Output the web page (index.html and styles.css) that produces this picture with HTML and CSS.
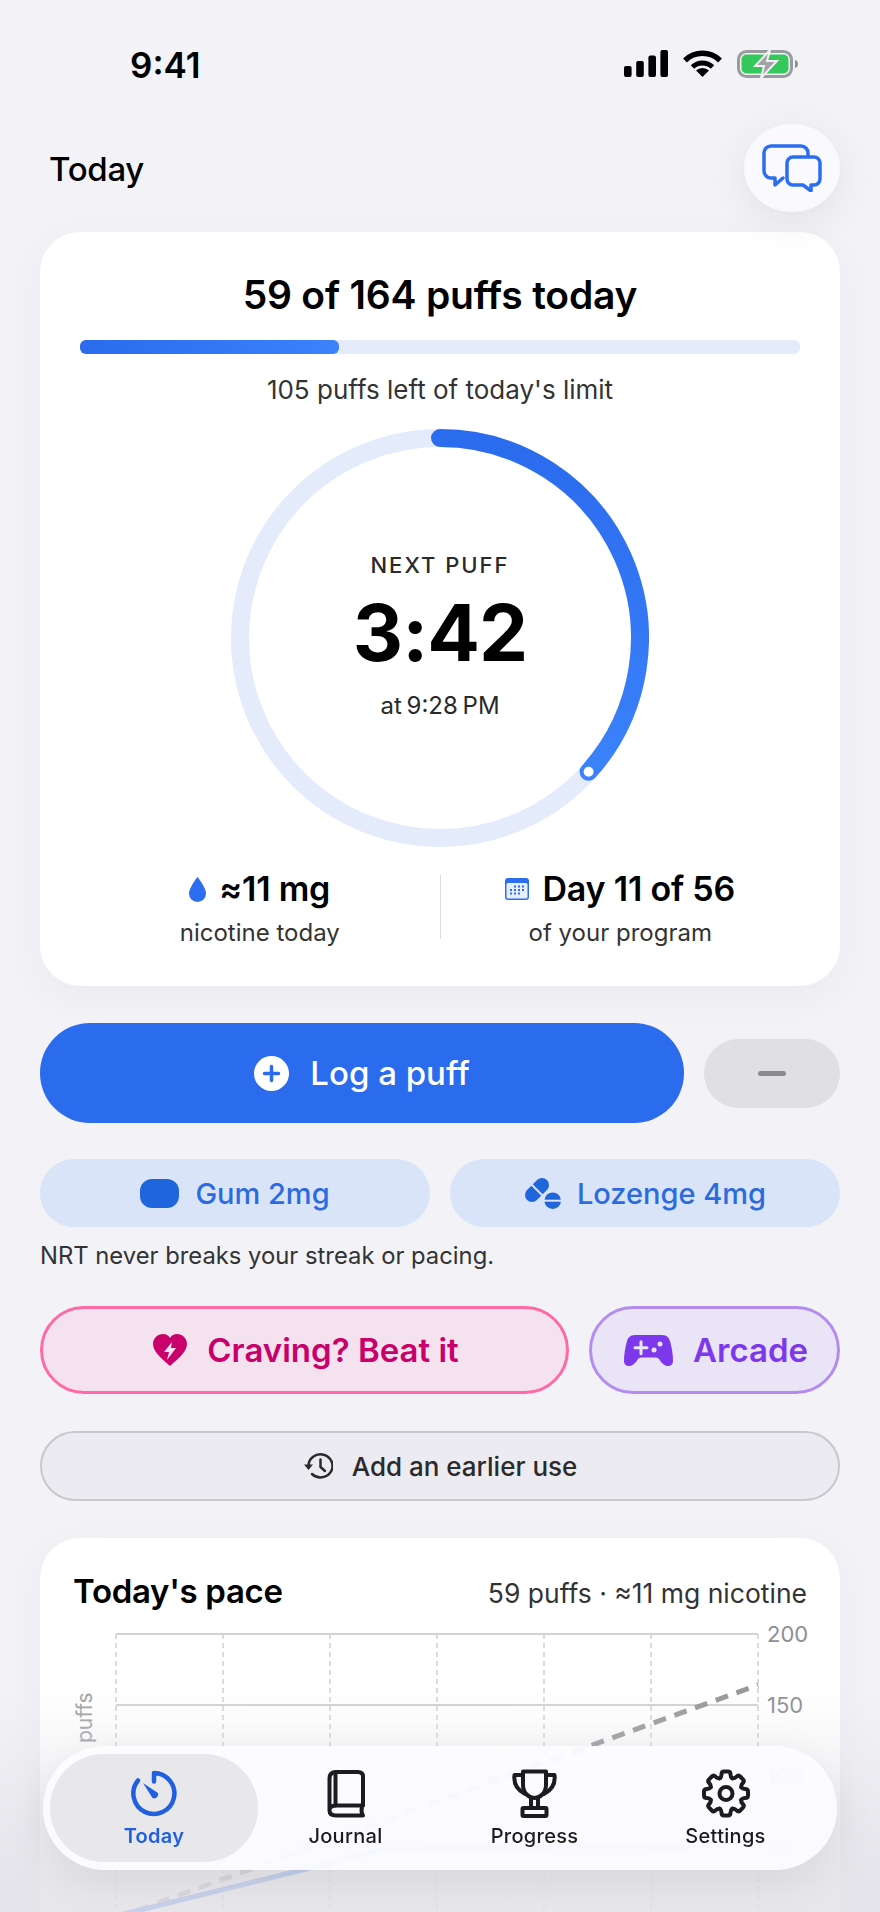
FILE: index.html
```html
<!DOCTYPE html>
<html>
<head>
<meta charset="UTF-8">
<link rel="stylesheet" href="styles.css">
<title>Today</title>
</head>
<body>
<div class="screen">

<div class="status">
  <div class="time">9:41</div>
  <div class="status-icons">
    <svg width="44" height="27" viewBox="0 0 44 27"><rect x="0" y="16" width="7.6" height="11" rx="2"/><rect x="12.2" y="11" width="7.6" height="16" rx="2"/><rect x="24.4" y="5.500" width="7.600" height="21.500" rx="2"/><rect x="36.400" y="0" width="7.600" height="27" rx="2"/></svg>
    <svg width="39" height="27" viewBox="0 0 39 27"><path d="M2 10.500A25 25 0 0 1 37 10.500" fill="none" stroke="#000" stroke-width="5.500"/><path d="M9.500 17A14.500 14.500 0 0 1 29.500 17" fill="none" stroke="#000" stroke-width="5"/><path d="M19.500 27L13 20.500A9.500 9.500 0 0 1 26 20.500Z"/></svg>
    <svg width="62" height="28" viewBox="0 0 62 28"><rect x="1.500" y="1.500" width="53" height="25" rx="8" fill="none" stroke="#9b9b9f" stroke-width="3"/><rect x="4.500" y="4.500" width="47" height="19" rx="5" fill="#34c759"/><path d="M58 10c2 .5 3 2 3 4s-1 3.500-3 4z" fill="#8e8e92"/><path d="M33 0L18 16H27L24 28L40 11H30Z" fill="#a3a3a7" stroke="#f2f2f7" stroke-width="2"/></svg>
  </div>
</div>

<div class="topbar">
  <div class="page-title">Today</div>
  <div class="chat-btn">
    <svg width="60" height="48" viewBox="0 0 60 48" fill="none" stroke="#2b6ef0" stroke-width="3.500" stroke-linejoin="round" stroke-linecap="round"><path d="M46 11V9a7 7 0 0 0-7-7H9a7 7 0 0 0-7 7v18a7 7 0 0 0 7 7h4v7l8-7"/><path d="M31 13h21a6 6 0 0 1 6 6v16a6 6 0 0 1-6 6h-3v6l-8-6H31a6 6 0 0 1-6-6V19a6 6 0 0 1 6-6z"/></svg>
  </div>
</div>

<div class="card main-card">
  <div class="count">59 of 164 puffs today</div>
  <div class="bar"><div class="bar-fill" style="width:36%"></div></div>
  <div class="left-text">105 puffs left of today's limit</div>

  <div class="ring">
    <svg width="418" height="418" viewBox="0 0 418 418">
      <defs><linearGradient id="ringgrad" x1="0" y1="0" x2="0" y2="1"><stop offset="0" stop-color="#2b6bee"/><stop offset="1" stop-color="#3b82fb"/></linearGradient></defs>
      <circle cx="209" cy="209" r="200" fill="none" stroke="#e4ebfb" stroke-width="18"/>
      <path d="M209 9A200 200 0 0 1 357.600 342.800" fill="none" stroke="url(#ringgrad)" stroke-width="18" stroke-linecap="round"/>
      <circle cx="357.600" cy="342.800" r="6.500" fill="#fff" stroke="#3b82fb" stroke-width="3"/>
    </svg>
    <div class="ring-center">
      <div class="next-label">NEXT PUFF</div>
      <div class="next-time">3:42</div>
      <div class="next-at">at 9:28 PM</div>
    </div>
  </div>

  <div class="stats">
    <div class="stat">
      <div class="stat-main">
        <svg width="17" height="25" viewBox="0 0 17 25"><path d="M8.500 0C8.500 0 0 10.500 0 16.500a8.500 8.500 0 0 0 17 0C17 10.500 8.500 0 8.500 0z" fill="#2b6ef0"/></svg>
        <span>≈11 mg</span>
      </div>
      <div class="stat-sub">nicotine today</div>
    </div>
    <div class="stat-div"></div>
    <div class="stat">
      <div class="stat-main">
        <svg width="24" height="22" viewBox="0 0 24 22"><rect x="0" y="0" width="24" height="22" rx="3" fill="#2b6ef0"/><rect x="1.500" y="5" width="21" height="15.500" rx="1.500" fill="#e6eefc"/><g fill="#2b6ef0"><rect x="9" y="7.500" width="2" height="2"/><rect x="13" y="7.500" width="2" height="2"/><rect x="17" y="7.500" width="2" height="2"/><rect x="5" y="11" width="2" height="2"/><rect x="9" y="11" width="2" height="2"/><rect x="13" y="11" width="2" height="2"/><rect x="17" y="11" width="2" height="2"/><rect x="5" y="14.500" width="2" height="2"/><rect x="9" y="14.500" width="2" height="2"/><rect x="13" y="14.500" width="2" height="2"/></g></svg>
        <span>Day 11 of 56</span>
      </div>
      <div class="stat-sub">of your program</div>
    </div>
  </div>
</div>

<div class="log-row">
  <div class="log-btn">
    <svg width="35" height="35" viewBox="0 0 35 35"><circle cx="17.500" cy="17.500" r="17.500" fill="#fff"/><path d="M17.500 10.500v14M10.500 17.500h14" stroke="#2b6bee" stroke-width="3.500" stroke-linecap="round"/></svg>
    <span>Log a puff</span>
  </div>
  <div class="minus-btn"><div class="minus"></div></div>
</div>

<div class="nrt-row">
  <div class="nrt-btn">
    <div class="gum"></div>
    <span>Gum 2mg</span>
  </div>
  <div class="nrt-btn">
    <svg width="37" height="31" viewBox="0 0 37 31"><path d="M8 17L18 7" stroke="#1f66dc" stroke-width="14" stroke-linecap="round"/><path d="M7 6L19 18" stroke="#d9e4f8" stroke-width="2"/><circle cx="28.700" cy="22.700" r="8.300" fill="#1f66dc"/><path d="M19 22.700H38" stroke="#d9e4f8" stroke-width="2"/></svg>
    <span>Lozenge 4mg</span>
  </div>
</div>
<div class="nrt-note">NRT never breaks your streak or pacing.</div>

<div class="help-row">
  <div class="help-btn craving">
    <svg width="34" height="32" viewBox="0 0 34 32"><path d="M17 32C12 27 0 19 0 10C0 4 5 0 10 0C13 0 15.500 1.500 17 4C18.500 1.500 21 0 24 0C29 0 34 4 34 10C34 19 22 27 17 32Z" fill="#c9006b"/><path d="M19 8L11 18H16L14 26L23 14H18Z" fill="#f4e3ee"/></svg>
    <span>Craving? Beat it</span>
  </div>
  <div class="help-btn arcade">
    <svg width="49" height="31" viewBox="0 0 49 31"><path d="M11 0H38C43 0 45 3 46 6C48 13 49 20 49 26C49 29 47 31 44 31C41 31 39 29 37 27L35 24C34 23 33 22.500 31 22.500H18C16 22.500 15 23 14 24L12 27C10 29 8 31 5 31C2 31 0 29 0 26C0 20 1 13 3 6C4 3 6 0 11 0Z" fill="#7e38ec"/><path d="M11 12.700h12M17 6.700v12" stroke="#e9e4f6" stroke-width="3" stroke-linecap="round"/><circle cx="30" cy="15" r="2.500" fill="#e9e4f6"/><circle cx="36" cy="9" r="2.500" fill="#e9e4f6"/></svg>
    <span>Arcade</span>
  </div>
</div>

<div class="earlier-btn">
  <svg width="30" height="26" viewBox="0 0 30 26" fill="none" stroke="#2a2a2a" stroke-width="2.500" stroke-linecap="round" stroke-linejoin="round"><path d="M5.500 13A12 11.500 0 1 1 9 21"/><path d="M17.500 6.500V14L22 18"/><path d="M1 11.500H10L5.500 17Z" fill="#2a2a2a" stroke="none"/></svg>
  <span>Add an earlier use</span>
</div>

<div class="card pace-card">
  <div class="pace-head">
    <div class="pace-title">Today's pace</div>
    <div class="pace-sum">59 puffs · ≈11 mg nicotine</div>
  </div>
  <svg class="chart" width="745" height="292" viewBox="73 1620 745 292">
    <g stroke="#cfcfd2" stroke-width="1.500" stroke-dasharray="5 4">
      <path d="M116 1634V1912M223 1634V1912M330 1634V1912M437 1634V1912M544 1634V1912M651 1634V1912M758 1634V1912"/>
    </g>
    <g stroke="#d2d2d5" stroke-width="2">
      <path d="M116 1634H758M116 1705H758M116 1776H758M116 1847H758"/>
    </g>
    <path d="M116 1918L758 1685" stroke="#98989c" stroke-width="5" stroke-dasharray="13 9" fill="none"/>
    <path d="M116 1916L302 1870L378 1850L600 1846L690 1848" stroke="#2b6ef0" stroke-width="5" fill="none"/>
    <g class="axis">
      <text x="767" y="1642">200</text>
      <text x="767" y="1713">150</text>
      <text x="767" y="1784">100</text>
      <text x="767" y="1855">50</text>
    </g>
    <text class="axis-name" transform="translate(92 1743) rotate(-90)">puffs</text>
  </svg>
</div>

<div class="fade"></div>

<div class="tabbar">
  <div class="tab tab-active">
    <svg width="46" height="46" viewBox="0 0 46 46"><path d="M23 11V2.500A20.500 20.500 0 1 1 7 10" fill="none" stroke="#2060e0" stroke-width="4.500" stroke-linecap="round" stroke-linejoin="round"/><path d="M12 12.500L27 22.500A4 4 0 0 1 21.500 27.500Z" fill="#2060e0"/></svg>
    <div class="tab-label">Today</div>
  </div>
  <div class="tab">
    <svg width="38" height="48" viewBox="0 0 38 48" fill="none" stroke="#1c1c1e" stroke-width="4" stroke-linejoin="round" stroke-linecap="round"><path d="M2.500 41V9Q2.500 2.500 9 2.500H31Q36 2.500 36 7V36H9Q2.500 36 2.500 41Q2.500 46 9 46H36Q33 41 36 36"/><path d="M8.500 3V36"/></svg>
    <div class="tab-label">Journal</div>
  </div>
  <div class="tab">
    <svg width="45" height="49" viewBox="0 0 45 49" fill="none" stroke="#1c1c1e" stroke-width="4" stroke-linejoin="round" stroke-linecap="round"><path d="M11 2.500H34V16C34 24 28 29 22.500 29C17 29 11 24 11 16Z"/><path d="M11 6H2.500C1.500 14 5 21 13 25M34 6H42.500C43.500 14 40 21 32 25"/><path d="M19 29V39M26 29V39"/><rect x="10.500" y="39" width="24" height="8" rx="1"/></svg>
    <div class="tab-label">Progress</div>
  </div>
  <div class="tab tab-last">
    <svg width="50" height="49" viewBox="-25 -24.500 50 49" fill="none" stroke="#1c1c1e" stroke-width="4" stroke-linecap="round">
      <defs><path id="tooth" d="M-6.300-15.200Q-4.500-16.500-4.500-19Q-4.500-22-2-22H2Q4.500-22 4.500-19Q4.500-16.500 6.300-15.200"/></defs>
      <use href="#tooth"/>
      <use href="#tooth" transform="rotate(45)"/>
      <use href="#tooth" transform="rotate(90)"/>
      <use href="#tooth" transform="rotate(135)"/>
      <use href="#tooth" transform="rotate(180)"/>
      <use href="#tooth" transform="rotate(225)"/>
      <use href="#tooth" transform="rotate(270)"/>
      <use href="#tooth" transform="rotate(315)"/>
      <circle r="6.500"/>
    </svg>
    <div class="tab-label">Settings</div>
  </div>
</div>

</div>
</body>
</html>
```

FILE: styles.css
```css
html,body{margin:0;padding:0}
body{font-family:'Inter',sans-serif;color:#000;background:#f2f2f7}
svg{display:block;flex:none}
.screen{position:relative;width:880px;height:1912px;overflow:hidden;background:#f2f2f7}

.status{display:flex;justify-content:space-between;align-items:center;height:28px;padding:50px 81px 0 130px}
.time{font-size:35px;font-weight:600;line-height:32px;margin-top:2px}
.status-icons{display:flex;gap:15px}

.topbar{display:flex;justify-content:space-between;align-items:center;margin-top:46px;padding:0 40px 0 49px;position:relative;z-index:2}
.page-title{font-size:33px;font-weight:500;letter-spacing:-.3px;margin-top:2px}
.chat-btn{width:96px;height:88px;border-radius:50%;background:#f9f9fe;display:flex;align-items:center;justify-content:center;box-shadow:0 10px 40px rgba(0,0,0,.07)}

.card{background:#fff;border-radius:40px;margin:0 40px;box-shadow:0 10px 40px rgba(0,0,0,.04)}
.main-card{margin-top:20px;padding:40px 40px 0;height:714px}
.count{font-size:39px;font-weight:600;line-height:46px;text-align:center;letter-spacing:-.2px}
.bar{height:14px;border-radius:6px;background:#e4ebfb;margin-top:22px}
.bar-fill{height:100%;border-radius:6px;background:linear-gradient(90deg,#2b6bee,#3b82fb)}
.left-text{font-size:26px;line-height:32px;text-align:center;color:#333;margin-top:20px}

.ring{display:grid;justify-items:center;align-items:center;margin-top:23px}
.ring>*{grid-area:1/1}
.ring-center{display:flex;flex-direction:column;align-items:center;padding-bottom:4px}
.next-label{font-size:22px;font-weight:500;letter-spacing:2px;line-height:28px;color:#2a2a2a}
.next-time{font-size:78px;font-weight:700;line-height:88px;margin-top:10px;letter-spacing:-1px}
.next-at{font-size:24px;line-height:30px;color:#2a2a2a;margin-top:14px;word-spacing:-2px}

.stats{display:flex;margin-top:22px}
.stat{flex:1;display:flex;flex-direction:column;align-items:center}
.stat-div{width:1px;height:64px;margin-top:6px;background:#dcdcdf}
.stat-main{display:flex;align-items:center;gap:13px;font-size:34px;font-weight:600;line-height:40px;letter-spacing:-.2px}
.stat-sub{font-size:24px;line-height:30px;color:#333;margin-top:9px}

.log-row{display:flex;align-items:center;gap:20px;margin:37px 40px 0}
.log-btn{flex:1;height:100px;border-radius:50px;background:#2b6bee;color:#fff;display:flex;align-items:center;justify-content:center;gap:21px;font-size:33px;font-weight:500}
.minus-btn{width:136px;height:69px;border-radius:35px;background:#dfdfe4;display:flex;align-items:center;justify-content:center}
.minus{width:28px;height:5px;border-radius:3px;background:#8a8a8e}

.nrt-row{display:flex;gap:20px;margin:36px 40px 0}
.nrt-btn{flex:1;height:68px;border-radius:34px;background:#d9e4f8;color:#2b6bdf;display:flex;align-items:center;justify-content:center;gap:16px;font-size:29px;font-weight:500}
.gum{width:39px;height:29px;border-radius:12px;background:#1f66dc}
.nrt-note{font-size:23.800px;line-height:30px;color:#333;margin:14px 40px 0}

.help-row{display:flex;gap:20px;margin:35px 40px 0}
.help-btn{box-sizing:border-box;height:88px;border-radius:44px;border:3px solid;display:flex;align-items:center;justify-content:center;font-size:33px;font-weight:600;padding-left:3px}
.craving{width:529px;gap:20px;background:#f4e3ee;border-color:#ff6aa5;color:#c9006b}
.arcade{flex:1;gap:20px;background:#e9e4f6;border-color:#b48cf0;color:#7e38ec}

.earlier-btn{box-sizing:border-box;height:70px;border-radius:35px;margin:37px 40px 0;border:2px solid #c8c8cc;background:#ecebf1;color:#2a2a2a;display:flex;align-items:center;justify-content:center;gap:19px;font-size:26px;font-weight:500}

.pace-card{margin-top:37px;padding:33px 33px 0;height:500px}
.pace-head{display:flex;justify-content:space-between;align-items:baseline;height:49px}
.pace-title{font-size:33px;font-weight:600;letter-spacing:-.3px}
.pace-sum{font-size:26.500px;color:#333}
.chart text{font-family:'Inter',sans-serif}
.axis{font-size:22px;fill:#8e8e93}
.axis-name{font-size:21px;fill:#a0a0a4}

.fade{position:absolute;left:0;right:0;bottom:0;height:222px;background:linear-gradient(180deg,rgba(226,226,232,0) 0,rgba(226,226,232,.25) 56px,rgba(226,226,232,.85) 190px)}

.tabbar{position:absolute;left:43px;right:43px;top:1746px;height:124px;box-sizing:border-box;border-radius:62px;padding:8px 7px;display:flex;background:rgba(252,252,255,.93);backdrop-filter:blur(1.500px);box-shadow:0 10px 40px rgba(0,0,0,.08)}
.tab{width:189px;display:flex;flex-direction:column;align-items:center;padding-top:15px;box-sizing:border-box;color:#1c1c1e}
.tab svg{height:49px}
.tab-active{width:208px;margin-right:-7px;background:#e8e8ea;border-radius:54px;color:#2060e0}
.tab-last{margin-left:2px}
.tab-label{font-size:20px;font-weight:500;line-height:24px;margin-top:6px;letter-spacing:.3px}
.tab-active .tab-label{font-weight:600}
```
